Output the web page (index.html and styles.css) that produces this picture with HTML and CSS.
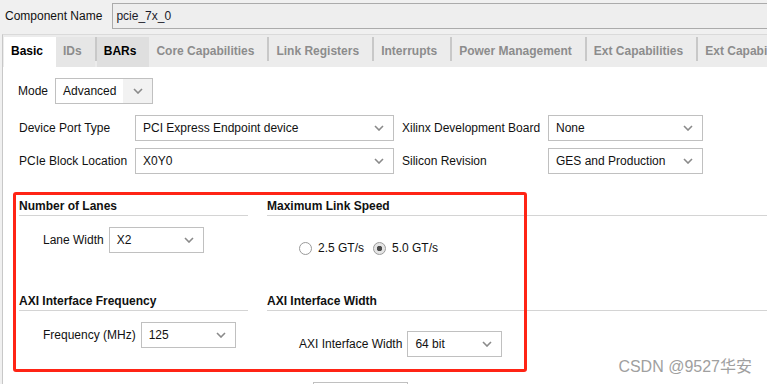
FILE: index.html
```html
<!DOCTYPE html>
<html lang="en">
<head>
    <meta charset="UTF-8">
    <meta name="viewport" content="width=device-width, initial-scale=1.0">
    <title>pcie_7x_0 - Customize IP</title>
    <link rel="stylesheet" href="styles.css">
</head>
<body>
    <div class="header">
        <span class="header-label">Component Name</span>
        <div class="name-field">pcie_7x_0</div>
    </div>

    <div class="notebook">
        <div class="tabs">
            <div class="tab active">Basic</div>
            <div class="tab shaded">IDs</div>
            <span class="tab-sep"></span>
            <div class="tab current">BARs</div>
            <div class="tab">Core Capabilities</div>
            <span class="tab-sep"></span>
            <div class="tab">Link Registers</div>
            <span class="tab-sep"></span>
            <div class="tab">Interrupts</div>
            <span class="tab-sep"></span>
            <div class="tab">Power Management</div>
            <span class="tab-sep"></span>
            <div class="tab">Ext Capabilities</div>
            <span class="tab-sep"></span>
            <div class="tab">Ext Capabilities 2</div>
        </div>

        <div class="panel">
            <div class="form-row mode-row">
                <span class="mode-label">Mode</span>
                <div class="combo combo-mode hover">
                    <span class="combo-text">Advanced</span>
                    <span class="combo-arrow"><svg width="10" height="6" viewBox="0 0 10 6"><polyline points="1,1 5,5 9,1" fill="none" stroke="#8A8A8A" stroke-width="1.6"/></svg></span>
                </div>
            </div>

            <div class="form-row device-row">
                <span class="field-label">Device Port Type</span>
                <div class="combo combo-wide">
                    <span class="combo-text">PCI Express Endpoint device</span>
                    <span class="combo-arrow"><svg width="10" height="6" viewBox="0 0 10 6"><polyline points="1,1 5,5 9,1" fill="none" stroke="#8A8A8A" stroke-width="1.6"/></svg></span>
                </div>
                <span class="field-label right-label">Xilinx Development Board</span>
                <div class="combo combo-board">
                    <span class="combo-text">None</span>
                    <span class="combo-arrow"><svg width="10" height="6" viewBox="0 0 10 6"><polyline points="1,1 5,5 9,1" fill="none" stroke="#8A8A8A" stroke-width="1.6"/></svg></span>
                </div>
            </div>

            <div class="form-row">
                <span class="field-label">PCIe Block Location</span>
                <div class="combo combo-wide">
                    <span class="combo-text">X0Y0</span>
                    <span class="combo-arrow"><svg width="10" height="6" viewBox="0 0 10 6"><polyline points="1,1 5,5 9,1" fill="none" stroke="#8A8A8A" stroke-width="1.6"/></svg></span>
                </div>
                <span class="field-label right-label">Silicon Revision</span>
                <div class="combo combo-board">
                    <span class="combo-text">GES and Production</span>
                    <span class="combo-arrow"><svg width="10" height="6" viewBox="0 0 10 6"><polyline points="1,1 5,5 9,1" fill="none" stroke="#8A8A8A" stroke-width="1.6"/></svg></span>
                </div>
            </div>

            <div class="sections">
                <div class="group">
                    <div class="group-title">Number of Lanes</div>
                    <div class="group-body body-left">
                        <div class="form-row">
                            <span class="inline-label">Lane Width</span>
                            <div class="combo combo-small">
                                <span class="combo-text">X2</span>
                                <span class="combo-arrow"><svg width="10" height="6" viewBox="0 0 10 6"><polyline points="1,1 5,5 9,1" fill="none" stroke="#8A8A8A" stroke-width="1.6"/></svg></span>
                            </div>
                        </div>
                    </div>
                </div>

                <div class="group">
                    <div class="group-title">Maximum Link Speed</div>
                    <div class="group-body body-radio">
                        <div class="radio-row">
                            <label class="radio"><span class="radio-dot"></span>2.5 GT/s</label>
                            <label class="radio"><span class="radio-dot checked"></span>5.0 GT/s</label>
                        </div>
                    </div>
                </div>

                <div class="group">
                    <div class="group-title">AXI Interface Frequency</div>
                    <div class="group-body body-left">
                        <div class="form-row">
                            <span class="inline-label">Frequency (MHz)</span>
                            <div class="combo combo-small">
                                <span class="combo-text">125</span>
                                <span class="combo-arrow"><svg width="10" height="6" viewBox="0 0 10 6"><polyline points="1,1 5,5 9,1" fill="none" stroke="#8A8A8A" stroke-width="1.6"/></svg></span>
                            </div>
                        </div>
                    </div>
                </div>

                <div class="group">
                    <div class="group-title">AXI Interface Width</div>
                    <div class="group-body body-right">
                        <div class="form-row">
                            <span class="inline-label">AXI Interface Width</span>
                            <div class="combo combo-small">
                                <span class="combo-text">64 bit</span>
                                <span class="combo-arrow"><svg width="10" height="6" viewBox="0 0 10 6"><polyline points="1,1 5,5 9,1" fill="none" stroke="#8A8A8A" stroke-width="1.6"/></svg></span>
                            </div>
                        </div>
                    </div>
                </div>

                <!-- 注目枠 -->
                <div class="mark-box"></div>
            </div>

            <div class="tail">
                <div class="combo combo-small"></div>
            </div>
        </div>
    </div>

    <div class="watermark">CSDN @9527华安</div>
</body>
</html>
```

FILE: styles.css
```css
* {
    box-sizing: border-box;
}
body {
    margin: 0;
    width: 767px;
    height: 384px;
    overflow: hidden;
    position: relative;
    display: flex;
    flex-direction: column;
    background-color: #F0F0F0;
    font-family: "Liberation Sans", Arial, sans-serif;
    font-size: 12px;
    color: #111111;
}
.header {
    flex: none;
    display: flex;
    align-items: flex-start;
    gap: 10px;
    height: 34px;
    padding: 3px 0 0 5px;
}
.header-label {
    line-height: 26px;
}
.name-field {
    flex: 1;
    height: 26px;
    margin-right: -4px;
    padding-left: 3px;
    line-height: 24px;
    background-color: #EEEEEE;
    border: 1px solid #ABABAB;
    color: #1A1A2A;
}
.notebook {
    flex: 1;
    min-height: 0;
    display: flex;
    flex-direction: column;
    margin-left: 2px;
    border-top: 1px solid #DADADA;
    border-left: 1px solid #C8C8C8;
}
.tabs {
    flex: none;
    display: flex;
    height: 32px;
    padding: 2px 0 0 1px;
    background-color: #ECECEC;
    white-space: nowrap;
    overflow: hidden;
}
.tab {
    flex: none;
    display: flex;
    align-items: center;
    padding: 0 13px 2px 7px;
    font-weight: bold;
    color: #8C8C8C;
}
.tab.active {
    background-color: #FFFFFF;
    color: #000000;
}
.tab.shaded {
    background-color: #E6E6E6;
}
.tab.current {
    background-color: #DFDFDF;
    color: #000000;
}
.tab-sep {
    flex: none;
    align-self: flex-start;
    width: 2px;
    height: 24px;
    background-color: #C8C8C8;
}
.panel {
    flex: 1;
    padding: 11px 0 0 16px;
    background-color: #FFFFFF;
}
.form-row {
    display: flex;
    align-items: center;
    white-space: nowrap;
}
.mode-row {
    margin-bottom: 11px;
}
.device-row {
    margin-bottom: 7px;
}
.mode-label {
    margin: 0 7px 0 -1px;
}
.field-label {
    width: 116px;
}
.right-label {
    width: 146px;
    margin-left: 8px;
}
.inline-label {
    margin-right: 5px;
}
.combo {
    flex: none;
    display: flex;
    align-items: center;
    height: 26px;
    border: 1px solid #C0C0C0;
    background-color: #FFFFFF;
}
.combo-text {
    flex: 1;
    padding-left: 7px;
    overflow: hidden;
}
.combo-arrow {
    align-self: stretch;
    display: flex;
    align-items: center;
    justify-content: center;
    width: 28px;
}
.combo.hover .combo-arrow {
    width: 29px;
    background-color: #F2F2F2;
}
.combo-mode {
    width: 98px;
}
.combo-wide {
    width: 259px;
}
.combo-board {
    width: 155px;
}
.combo-small {
    width: 95px;
}
.sections {
    position: relative;
    display: grid;
    grid-template-columns: 229px 1fr;
    grid-template-rows: 95px auto;
    column-gap: 19px;
    margin-top: 25px;
}
.group-title {
    padding-bottom: 2px;
    line-height: 14px;
    font-weight: bold;
    border-bottom: 1px solid #D4D4D4;
}
.body-left {
    padding: 11px 0 0 24px;
}
.body-radio {
    padding: 24px 0 0 32px;
}
.body-right {
    padding: 20px 0 0 32px;
}
.radio-row {
    display: flex;
    align-items: center;
    height: 16px;
}
.radio {
    display: flex;
    align-items: center;
    gap: 6px;
    margin-right: 9px;
}
.radio-dot {
    width: 13px;
    height: 13px;
    border-radius: 50%;
    border: 1px solid #9A9A9A;
    background-color: #FFFFFF;
}
.radio-dot.checked {
    background: radial-gradient(circle, #4A4A4A 0 2.5px, #E4E4E4 3px);
}
.mark-box {
    position: absolute;
    left: -6px;
    top: -7px;
    width: 514px;
    height: 180px;
    border: 3px solid #FF2415;
    border-radius: 3px;
}
.tail {
    margin-top: 25px;
    padding-left: 294px;
}
.watermark {
    position: absolute;
    right: 15px;
    bottom: 8px;
    font-family: "Liberation Sans", "Noto Sans CJK SC", sans-serif;
    font-size: 16px;
    line-height: 18px;
    color: #A0A0A0;
}
```
